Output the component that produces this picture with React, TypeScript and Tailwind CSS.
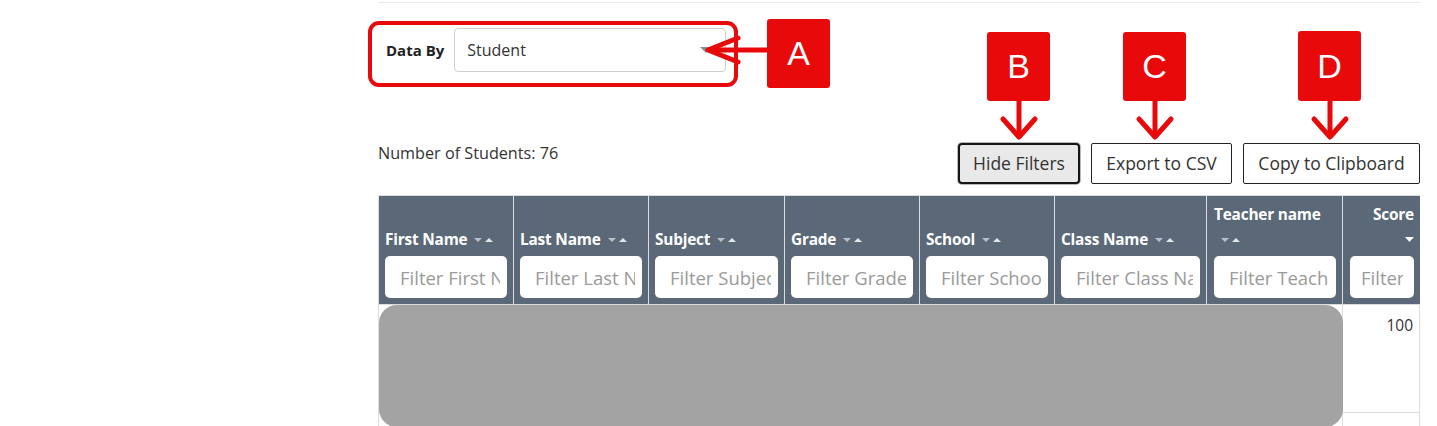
import React from "react";

const font = { fontFamily: '"Open Sans", "Liberation Sans", sans-serif' };

function SortIcons() {
  return (
    <svg width="20" height="6" viewBox="0 0 20 6" className="ml-[7px] inline-block">
      <polygon points="0,1 8,1 4,5" fill="#b8c0c9" />
      <polygon points="11,5 19,5 15,1" fill="#e2e6ea" />
    </svg>
  );
}

type Col = { title: string; ph: string };

const cols: Col[] = [
  { title: "First Name", ph: "Filter First Name" },
  { title: "Last Name", ph: "Filter Last Name" },
  { title: "Subject", ph: "Filter Subject" },
  { title: "Grade", ph: "Filter Grade" },
  { title: "School", ph: "Filter School" },
  { title: "Class Name", ph: "Filter Class Name" },
];

function FilterInput({ ph, pad }: { ph: string; pad: string }) {
  return (
    <input
      readOnly
      placeholder={ph}
      className={`mt-[4px] h-[42px] w-full min-w-0 rounded-[5px] bg-white ${pad} text-[18.5px] text-[#333] placeholder:text-[#9a9a9a] outline-none`}
      style={font}
    />
  );
}

function HeaderCell({ c }: { c: Col }) {
  return (
    <div className="flex min-w-0 flex-col justify-end border-l border-[#d9dde2] pl-[6px] pr-[6px] pb-[6px]">
      <div className="flex items-center text-[15.4px] font-bold leading-[24px] text-white tracking-[-0.2px] whitespace-nowrap">
        {c.title}
        <SortIcons />
      </div>
      <FilterInput ph={c.ph} pad="pl-[15px] pr-[7px]" />
    </div>
  );
}

function RedBox({ letter, className }: { letter: string; className: string }) {
  return (
    <div
      className={`absolute flex items-center justify-center rounded-[3px] bg-[#e8090b] text-[34px] text-white ${className}`}
      style={{ fontFamily: '"Liberation Sans", Arial, sans-serif' }}
    >
      {letter}
    </div>
  );
}

function DownArrow({ x, y }: { x: number; y: number }) {
  return (
    <svg
      className="absolute"
      style={{ left: x - 20, top: y }}
      width="40"
      height="42"
      viewBox="0 0 40 42"
    >
      <line x1="20" y1="0" x2="20" y2="36" stroke="#e8090b" strokeWidth="5" />
      <polyline
        points="4,19 20,37 36,19"
        fill="none"
        stroke="#e8090b"
        strokeWidth="5"
        strokeLinecap="round"
        strokeLinejoin="round"
      />
    </svg>
  );
}

export default function App() {
  return (
    <div className="relative h-[426px] w-[1437px] overflow-hidden bg-white text-[#333]" style={font}>
      <div className="pl-[378px] pr-[17px]">
        <div className="mt-[2px] border-t border-[#e9e9e9]" />

        {/* Data By */}
        <div className="mt-[25px] flex items-center">
          <span className="ml-[8px] text-[15px] font-bold text-[#222]">Data By</span>
          <div className="relative ml-[10px] flex h-[44px] w-[272px] items-center rounded-[4px] border border-[#cfcfcf] pl-[12px] text-[16px] text-[#333]">
            Student
            <svg className="absolute right-[13px] top-[18px]" width="12" height="7" viewBox="0 0 12 7">
              <polygon points="0,0 12,0 6,6" fill="#8c8c8c" />
            </svg>
          </div>
        </div>

        {/* Count + buttons */}
        <div className="mt-[71px] flex items-start justify-between">
          <div className="mt-[-2px] text-[16.2px] leading-[24px] text-[#333]">Number of Students: 76</div>
          <div className="flex gap-[11px] text-[17.5px] text-[#333]">
            <button className="h-[41px] w-[122px] rounded-[4px] border-2 border-[#161616] bg-[#e9e9e9] shadow-[0_0_0_1px_#b9b9b9]">
              Hide Filters
            </button>
            <button className="h-[41px] w-[141px] rounded-[2px] border border-[#222] bg-white">
              Export to CSV
            </button>
            <button className="h-[41px] w-[177px] rounded-[2px] border border-[#222] bg-white">
              Copy to Clipboard
            </button>
          </div>
        </div>

        {/* Table */}
        <div className="mt-[11px] border-t border-[#dcdcdc]">
          <div className="grid h-[108px] grid-cols-[135px_135px_136px_135px_135px_152px_136px_78px] bg-[#5a6878]">
            {cols.map((c) => (
              <HeaderCell key={c.title} c={c} />
            ))}
            <div className="flex min-w-0 flex-col justify-end border-l border-[#d9dde2] pl-[7px] pr-[6px] pb-[6px]">
              <div className="text-[15.4px] font-bold leading-[24px] text-white tracking-[-0.2px] whitespace-nowrap">
                Teacher name
              </div>
              <div className="flex h-[25px] items-center">
                <SortIcons />
              </div>
              <FilterInput ph="Filter Teacher name" pad="pl-[15px] pr-[7px]" />
            </div>
            <div className="flex min-w-0 flex-col items-end justify-end border-l border-[#d9dde2] pl-[7px] pr-[6px] pb-[6px]">
              <div className="text-[15.4px] font-bold leading-[24px] text-white tracking-[-0.2px]">Score</div>
              <div className="flex h-[25px] items-center">
                <svg width="9" height="5" viewBox="0 0 9 5">
                  <polygon points="0,0 9,0 4.5,5" fill="#ffffff" />
                </svg>
              </div>
              <FilterInput ph="Filter Score" pad="pl-[11px] pr-[11px]" />
            </div>
          </div>

          {/* body */}
          <div className="grid grid-cols-[135px_135px_136px_135px_135px_152px_136px_78px] border-t border-[#dcdcdc]">
            {[0, 1].map((r) => (
              <React.Fragment key={r}>
                {[0, 1, 2, 3, 4, 5, 6].map((i) => (
                  <div key={i} className="h-[108px] border-b border-l border-[#dcdcdc]" />
                ))}
                <div className="h-[108px] border-b border-l border-r border-[#dcdcdc] pt-[8px] pr-[6px] text-right text-[15.5px] leading-[24px] text-[#333]">
                  100
                </div>
              </React.Fragment>
            ))}
          </div>
        </div>
      </div>

      {/* redaction overlay */}
      <div className="absolute left-[379px] top-[305px] h-[122px] w-[964px] rounded-[18px] bg-[#a3a3a3]" />

      {/* Annotation A */}
      <div className="absolute left-[368px] top-[21px] h-[66px] w-[370px] rounded-[11px] border-[4px] border-[#e8090b]" />
      <svg className="absolute left-[700px] top-[30px]" width="70" height="40" viewBox="0 0 70 40">
        <line x1="10" y1="20" x2="70" y2="20" stroke="#e8090b" strokeWidth="5" />
        <polyline
          points="38,8 8,20 38,32"
          fill="none"
          stroke="#e8090b"
          strokeWidth="5"
          strokeLinecap="round"
          strokeLinejoin="round"
        />
      </svg>
      <RedBox letter="A" className="left-[767px] top-[19px] h-[69px] w-[63px]" />

      {/* Annotation B */}
      <RedBox letter="B" className="left-[987px] top-[32px] h-[69px] w-[63px]" />
      <DownArrow x={1019} y={100} />

      {/* Annotation C */}
      <RedBox letter="C" className="left-[1123px] top-[32px] h-[69px] w-[63px]" />
      <DownArrow x={1155} y={100} />

      {/* Annotation D */}
      <RedBox letter="D" className="left-[1298px] top-[31px] h-[70px] w-[63px]" />
      <DownArrow x={1330} y={100} />
    </div>
  );
}
